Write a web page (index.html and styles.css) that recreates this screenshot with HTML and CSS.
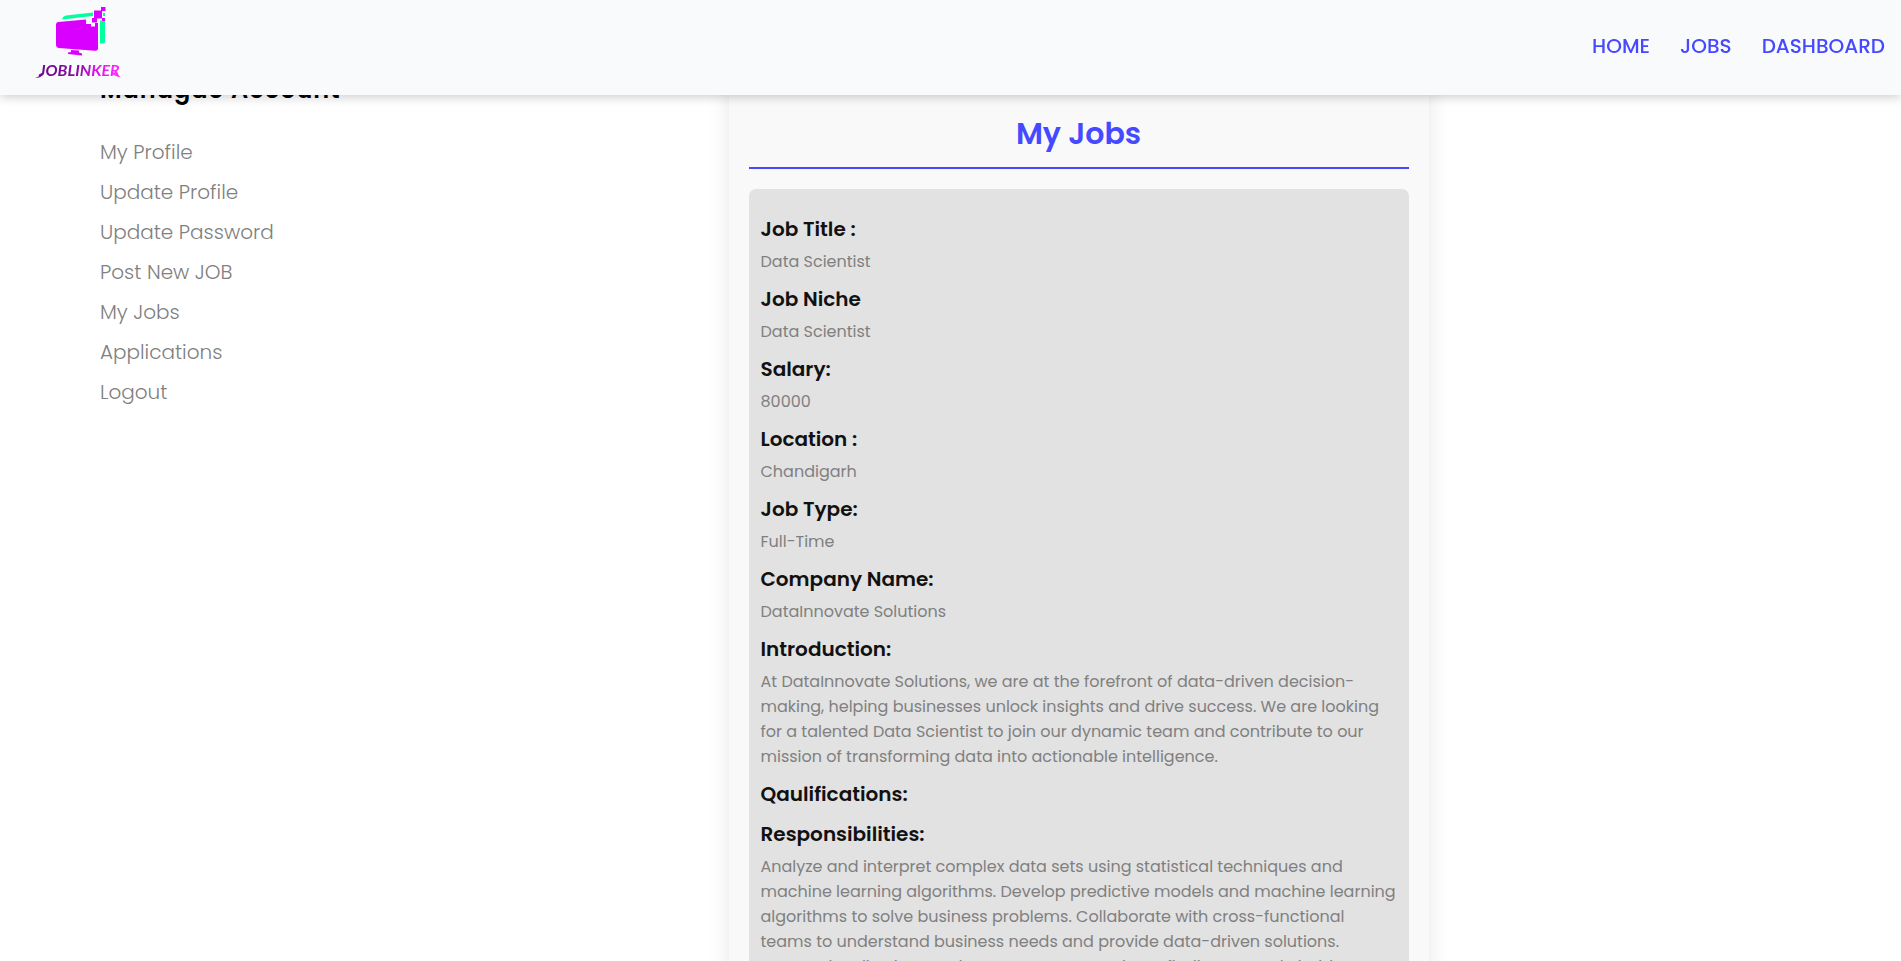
FILE: index.html
```html
<!DOCTYPE html>
<html lang="en">
<head>
<meta charset="utf-8">
<title>JobLinker - My Jobs</title>
<link rel="stylesheet" href="styles.css">
</head>
<body>
<header class="navbar">
  <a class="brand" href="#" aria-label="JobLinker home">
    <svg class="logo" viewBox="0 0 94 80" width="94" height="80" aria-hidden="true">
      <defs>
        <linearGradient id="word" x1="0" x2="1" y1="0" y2="0">
          <stop offset="0" stop-color="#6a0a88"/>
          <stop offset="0.5" stop-color="#8a0aa5"/>
          <stop offset="0.7" stop-color="#e010ee"/>
          <stop offset="1" stop-color="#ff2cff"/>
        </linearGradient>
      </defs>
      <path fill="#00ff9d" d="M32 19.500 Q33 16 36 15.500 L63 12.500 V16 L32 19.500Z M70 20.500 H75 V41 Q75 43.500 72.500 43.500 H70Z M73 13 H75 V16 H73Z"/>
      <path fill="#d900ff" d="M28 22 L56 19.500 V24 H61 V26.500 H65 V23 H68 V48 Q68 51 65 50.700 L28.500 48 Q26 47.500 26 45 V24.500 Q26 22.300 28 22Z"/>
      <path fill="#d900ff" d="M64 10.500 H72 V18.500 H67 V22.500 H62 V18 H64Z M71 7 H75.500 V11 H71Z M72 18 H75 V21 H72Z"/>
      <path fill="#d900ff" d="M41 50 L49 50.500 V52.500 L52 53.500 V55.500 L38 54 V52.500 L41 52Z"/>
      <path fill="#6a0a88" d="M5 77.500 Q9 77.500 11 73 L13 74 Q10 79 5 77.500Z"/>
      <path fill="#ff2cff" d="M84 72 L91 77.500 L87 76.500 L82 74Z"/>
      <text class="logo-word" x="9" y="76" fill="url(#word)">JOBLINKER</text>
    </svg>
  </a>
  <nav class="nav-links" aria-label="Main">
    <a href="#">HOME</a>
    <a href="#">JOBS</a>
    <a href="#">DASHBOARD</a>
  </nav>
</header>
<main class="account">
  <aside class="sidebar">
    <h2 class="sidebar-title">Managae Account</h2>
    <ul class="menu">
      <li><a href="#">My Profile</a></li>
      <li><a href="#">Update Profile</a></li>
      <li><a href="#">Update Password</a></li>
      <li><a href="#">Post New JOB</a></li>
      <li><a href="#">My Jobs</a></li>
      <li><a href="#">Applications</a></li>
      <li><a href="#">Logout</a></li>
    </ul>
  </aside>
  <section class="panel">
    <h1 class="panel-title">My Jobs</h1>
    <dl class="job">
      <dt>Job Title :</dt><dd>Data Scientist</dd>
      <dt>Job Niche</dt><dd>Data Scientist</dd>
      <dt>Salary:</dt><dd>80000</dd>
      <dt>Location :</dt><dd>Chandigarh</dd>
      <dt>Job Type:</dt><dd>Full-Time</dd>
      <dt>Company Name:</dt><dd>DataInnovate Solutions</dd>
      <dt>Introduction:</dt>
      <dd>At DataInnovate Solutions, we are at the forefront of data-driven decision-making, helping businesses unlock insights and drive success. We are looking for a talented Data Scientist to join our dynamic team and contribute to our mission of transforming data into actionable intelligence.</dd>
      <dt>Qaulifications:</dt>
      <dt>Responsibilities:</dt>
      <dd>Analyze and interpret complex data sets using statistical techniques and machine learning algorithms. Develop predictive models and machine learning algorithms to solve business problems. Collaborate with cross-functional teams to understand business needs and provide data-driven solutions. Create visualizations and reports to communicate findings to stakeholders.</dd>
    </dl>
  </section>
</main>
</body>
</html>
```
FILE: styles.css
```css
* { box-sizing: border-box; margin: 0; padding: 0; }

body {
  height: 100vh;
  overflow: hidden;
  background: #fff;
  color: #111;
  font-family: Poppins, Inter, "Open Sans", sans-serif;
  font-size: 16px;
}

a { color: inherit; text-decoration: none; }

.navbar {
  position: fixed;
  inset: 0 0 auto;
  z-index: 10;
  display: flex;
  align-items: flex-start;
  justify-content: space-between;
  height: 95px;
  padding: 0 16px 0 30px;
  background: #f9fafc;
  box-shadow: 0 2px 10px rgba(0, 0, 0, 0.2);
}

.logo { display: block; }
.logo-word { font: italic 700 16px Lato, sans-serif; }

.nav-links {
  display: flex;
  gap: 30px;
  padding-top: 31px;
  color: #4549ff;
  font-size: 20px;
  font-weight: 500;
  line-height: 30px;
}

.account {
  display: grid;
  grid-template-columns: 256px 1fr;
  align-items: start;
  height: 100%;
  padding: 72px 100px 0;
  overflow-y: auto;
  scrollbar-width: none;
}

.sidebar-title {
  margin-bottom: 29px;
  color: #000;
  font-size: 24px;
  font-weight: 600;
  letter-spacing: 1px;
  line-height: 36px;
}

.menu { display: grid; gap: 10px; list-style: none; }
.menu a {
  color: gray;
  font-size: 20px;
  font-weight: 300;
  line-height: 30px;
}
.menu li { height: 30px; }

.panel {
  justify-self: center;
  width: 100%;
  max-width: 700px;
  padding: 39px 20px 20px;
  background: #f9f9f9;
  box-shadow: 0 0 20px rgba(0, 0, 0, 0.1);
}

.panel-title {
  margin-bottom: 20px;
  padding-bottom: 10px;
  border-bottom: 2px solid #4549ff;
  color: #4549ff;
  font-size: 30px;
  font-weight: 600;
  line-height: 46px;
  text-align: center;
}

.job {
  padding: 25px 12px;
  border-radius: 7px;
  background: #e2e2e2;
}
.job dt {
  margin-bottom: 5px;
  font-size: 20px;
  font-weight: 600;
  line-height: 30px;
}
.job dt + dt { margin-top: 10px; }
.job dd {
  margin-bottom: 10px;
  color: gray;
  line-height: 25px;
}
```
